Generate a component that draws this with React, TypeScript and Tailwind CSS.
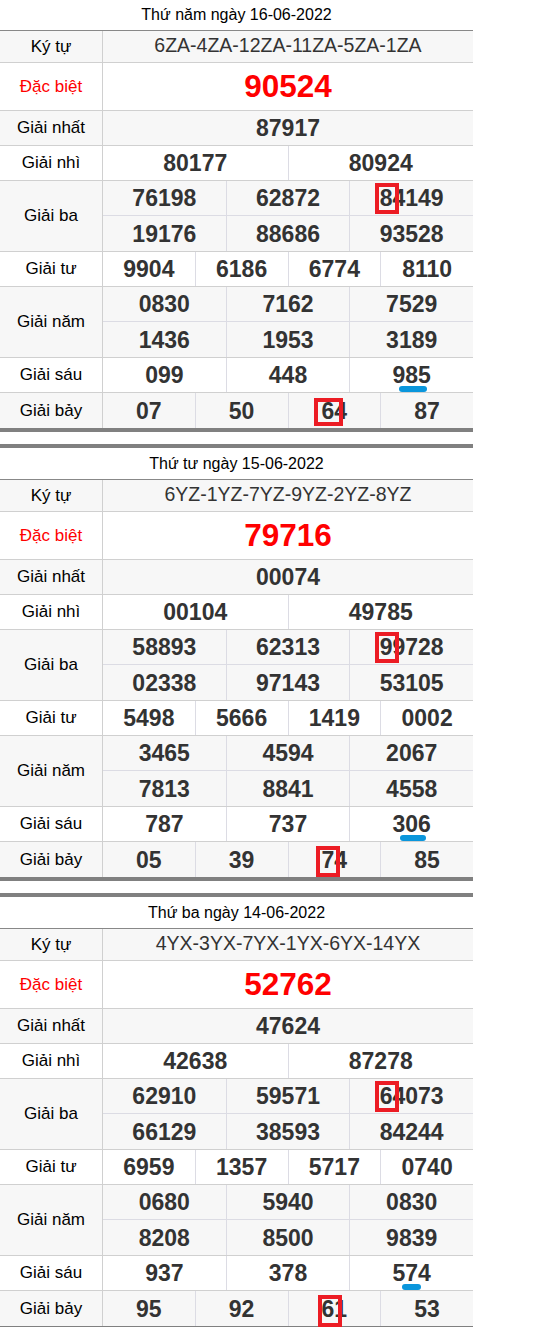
import clsx from "clsx";
import type { ReactNode } from "react";

type Mark = { l: number; w: number; t?: number; h?: number };

type Draw = {
  title: string;
  code: string;
  special: string;
  first: string;
  second: string[];
  third: string[];
  fourth: string[];
  fifth: string[];
  sixth: string[];
  seventh: string[];
  thirdBox: Mark;
  sixthLine: Mark;
  seventhBox: Mark;
};

const DRAWS: Draw[] = [
  {
    title: "Thứ năm ngày 16-06-2022",
    code: "6ZA-4ZA-12ZA-11ZA-5ZA-1ZA",
    special: "90524",
    first: "87917",
    second: ["80177", "80924"],
    third: ["76198", "62872", "84149", "19176", "88686", "93528"],
    fourth: ["9904", "6186", "6774", "8110"],
    fifth: ["0830", "7162", "7529", "1436", "1953", "3189"],
    sixth: ["099", "448", "985"],
    seventh: ["07", "50", "64", "87"],
    thirdBox: { l: -5, w: 24, t: -2, h: 31 },
    sixthLine: { l: 7, w: 28 },
    seventhBox: { l: -8, w: 29, t: 0, h: 28 },
  },
  {
    title: "Thứ tư ngày 15-06-2022",
    code: "6YZ-1YZ-7YZ-9YZ-2YZ-8YZ",
    special: "79716",
    first: "00074",
    second: ["00104", "49785"],
    third: ["58893", "62313", "99728", "02338", "97143", "53105"],
    fourth: ["5498", "5666", "1419", "0002"],
    fifth: ["3465", "4594", "2067", "7813", "8841", "4558"],
    sixth: ["787", "737", "306"],
    seventh: ["05", "39", "74", "85"],
    thirdBox: { l: -5, w: 24, t: -2, h: 31 },
    sixthLine: { l: 8, w: 26 },
    seventhBox: { l: -6, w: 24, t: -1, h: 31 },
  },
  {
    title: "Thứ ba ngày 14-06-2022",
    code: "4YX-3YX-7YX-1YX-6YX-14YX",
    special: "52762",
    first: "47624",
    second: ["42638", "87278"],
    third: ["62910", "59571", "64073", "66129", "38593", "84244"],
    fourth: ["6959", "1357", "5717", "0740"],
    fifth: ["0680", "5940", "0830", "8208", "8500", "9839"],
    sixth: ["937", "378", "574"],
    seventh: ["95", "92", "61", "53"],
    thirdBox: { l: -5, w: 24, t: -2, h: 31 },
    sixthLine: { l: 10, w: 19 },
    seventhBox: { l: -4, w: 24, t: -1, h: 32 },
  },
];

const Num = ({ value, box, line }: { value: string; box?: Mark; line?: Mark }) => (
  <span className="relative inline-block leading-[26px]">
    {value}
    {box && (
      <span
        className="absolute border-4 border-[#ec1c24]"
        style={{ left: box.l, width: box.w, top: box.t, height: box.h }}
      />
    )}
    {line && (
      <span
        className="absolute top-[24px] h-[6px] rounded-full bg-[#0a96dc]"
        style={{ left: line.l, width: line.w }}
      />
    )}
  </span>
);

const Cells = ({ items, marks = {}, className }: { items: string[]; marks?: Record<number, ReactNode>; className?: string }) => (
  <div className={clsx("flex", className)}>
    {items.map((n, i) => (
      <div
        key={i}
        className={clsx(
          "flex flex-1 basis-0 items-center justify-center",
          i > 0 && "border-l border-[#dcdce4]"
        )}>
        {marks[i] ?? <Num value={n} />}
      </div>
    ))}
  </div>
);

const Row = (props: {
  label: string;
  gray?: boolean;
  red?: boolean;
  last?: boolean;
  height: string;
  children: ReactNode;
}) => {
  const { label, gray, red, last, height, children } = props;
  return (
    <div
      className={clsx(
        "flex",
        height,
        gray ? "bg-[#f7f7f7]" : "bg-white",
        !last && "border-b border-[#d0d0d0]"
      )}>
      <div
        className={clsx(
          "flex w-[103px] shrink-0 items-center justify-center border-r border-[#d0d0d0] text-[17px]",
          red ? "text-[#ff0000]" : "text-black"
        )}>
        {label}
      </div>
      <div className="flex min-w-0 flex-1 flex-col text-[23px] font-bold text-[#333]">{children}</div>
    </div>
  );
};

const DrawTable = ({ d }: { d: Draw }) => (
  <div className="border-y-4 border-[#808080]">
    <div className="flex h-[32px] items-center justify-center border-b border-[#888] bg-white pt-[1px] text-[16px] text-black">
      {d.title}
    </div>

    <Row label="Ký tự" gray height="h-[32px]">
      <div className="flex h-full items-center justify-center pb-[2px] text-[19.5px] font-normal">{d.code}</div>
    </Row>

    <Row label="Đặc biệt" red height="h-[48px]">
      <div className="flex h-full items-center justify-center text-[31.5px] text-[#ff0000]">{d.special}</div>
    </Row>

    <Row label="Giải nhất" gray height="h-[35px]">
      <Cells items={[d.first]} className="h-full" />
    </Row>

    <Row label="Giải nhì" height="h-[35px]">
      <Cells items={d.second} className="h-full" />
    </Row>

    <Row label="Giải ba" gray height="h-[71px]">
      <Cells
        items={d.third.slice(0, 3)}
        className="h-[35px] border-b border-[#dcdce4]"
        marks={{ 2: <Num value={d.third[2]} box={d.thirdBox} /> }}
      />
      <Cells items={d.third.slice(3)} className="h-[35px]" />
    </Row>

    <Row label="Giải tư" height="h-[35px]">
      <Cells items={d.fourth} className="h-full" />
    </Row>

    <Row label="Giải năm" gray height="h-[71px]">
      <Cells items={d.fifth.slice(0, 3)} className="h-[35px] border-b border-[#dcdce4]" />
      <Cells items={d.fifth.slice(3)} className="h-[35px]" />
    </Row>

    <Row label="Giải sáu" height="h-[35px]">
      <Cells
        items={d.sixth}
        className="h-full"
        marks={{ 2: <Num value={d.sixth[2]} line={d.sixthLine} /> }}
      />
    </Row>

    <Row label="Giải bảy" gray last height="h-[35px]">
      <Cells
        items={d.seventh}
        className="h-full"
        marks={{ 2: <Num value={d.seventh[2]} box={d.seventhBox} /> }}
      />
    </Row>
  </div>
);

export default function App() {
  return (
    <div className="min-h-screen bg-white font-['Liberation_Sans',Arial,sans-serif]">
      <div className="-mt-[5px] flex w-[473px] flex-col gap-3">
        {DRAWS.map((d) => (
          <DrawTable key={d.title} d={d} />
        ))}
      </div>
    </div>
  );
}
